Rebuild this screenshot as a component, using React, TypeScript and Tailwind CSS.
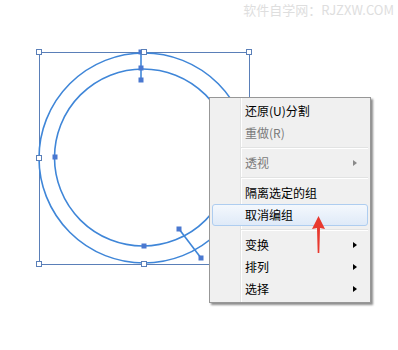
import React from 'react';

interface MenuEntry {
  label?: string;
  disabled?: boolean;
  submenu?: boolean;
  active?: boolean;
  separator?: boolean;
}

const entries: MenuEntry[] = [
  { label: '还原(U)分割' },
  { label: '重做(R)', disabled: true },
  { separator: true },
  { label: '透视', disabled: true, submenu: true },
  { separator: true },
  { label: '隔离选定的组' },
  { label: '取消编组', active: true },
  { separator: true },
  { label: '变换', submenu: true },
  { label: '排列', submenu: true },
  { label: '选择', submenu: true },
];

const font = { fontFamily: '"Noto Sans CJK SC", "Noto Sans", sans-serif' };

const Handle = ({ x, y, hollow }: { x: number; y: number; hollow?: boolean }) =>
  hollow ? (
    <rect x={x - 2.5} y={y - 2.5} width={5} height={5} fill="#fff" stroke="#5a7fb8" strokeWidth={1} />
  ) : (
    <rect x={x - 2.5} y={y - 2.5} width={5} height={5} fill="#4a78d0" />
  );

const Artwork = () => (
  <svg className="absolute inset-0" width={398} height={350} viewBox="0 0 398 350">
    <rect x={39.5} y={52.5} width={210} height={212} fill="none" stroke="#5a7fb8" strokeWidth={1} />
    <circle cx={144} cy={158} r={105} fill="none" stroke="#3f86d8" strokeWidth={1.6} />
    <circle cx={143} cy={157.5} r={88.5} fill="none" stroke="#3f86d8" strokeWidth={1.6} />
    <line x1={141} y1={52} x2={141} y2={80} stroke="#3f86d8" strokeWidth={1.6} />
    <line x1={179} y1={229} x2={201} y2={258} stroke="#3f86d8" strokeWidth={1.6} />
    {[
      [39, 52],
      [249, 52],
      [39, 158],
      [249, 158],
      [39, 264],
      [144, 264],
      [249, 264],
    ].map(([x, y]) => (
      <Handle key={`${x}-${y}`} x={x} y={y} hollow />
    ))}
    <Handle x={141} y={52} />
    <Handle x={144} y={52} hollow />
    <Handle x={141} y={68} />
    <Handle x={141} y={80} />
    <Handle x={55} y={157} />
    <Handle x={144} y={246} />
    <Handle x={179} y={229} />
    <Handle x={201} y={258} />
  </svg>
);

const Arrow = () => (
  <svg className="absolute left-[311px] top-[216px]" width={15} height={38} viewBox="0 0 15 38">
    <path d="M7.5 0 L14 13 L9 12 L8.3 37 L6.7 37 L6 12 L1 13 Z" fill="#e8392f" />
  </svg>
);

const ContextMenu = () => (
  <div
    className="absolute left-[209px] top-[97px] w-[162px] border border-[#979797] bg-[#f0f0f0] py-[2px] shadow-[2px_2px_2px_rgba(0,0,0,0.45)]"
    style={font}
  >
    <div className="absolute left-[30px] top-0 bottom-0 w-px bg-[#e2e3e3]" />
    <div className="absolute left-[31px] top-0 bottom-0 w-px bg-white" />
    {entries.map((e, i) =>
      e.separator ? (
        <div key={i} className="relative flex h-[8px] items-center pl-[31px] pr-[2px]">
          <div className="w-full">
            <div className="h-px bg-[#e2e3e3]" />
            <div className="h-px bg-white" />
          </div>
        </div>
      ) : (
        <div key={i} className="relative h-[22px] px-[2px]">
          <div
            className={`flex h-full items-center rounded-[3px] border pl-[32px] pr-[10px] ${
              e.active
                ? 'border-[#aecdf0] bg-gradient-to-b from-[#f4f8fd] to-[#dfeaf8]'
                : 'border-transparent'
            }`}
          >
            <span
              className={`flex-1 text-[12px] leading-none ${
                e.disabled ? 'text-[#7a7a7a]' : 'text-black'
              }`}
            >
              {e.label}
            </span>
            {e.submenu && (
              <span
                className={`h-0 w-0 border-y-[3.5px] border-l-[4px] border-y-transparent ${
                  e.disabled ? 'border-l-[#8a8a8a]' : 'border-l-black'
                }`}
              />
            )}
          </div>
        </div>
      )
    )}
  </div>
);

const App = () => (
  <div className="relative h-[350px] w-[398px] overflow-hidden bg-white">
    <Artwork />
    <div
      className="absolute right-[4px] top-[2px] text-[13px] leading-[16px] text-[#dedede]"
      style={font}
    >
      软件自学网：RJZXW.COM
    </div>
    <ContextMenu />
    <Arrow />
  </div>
);

export default App;
